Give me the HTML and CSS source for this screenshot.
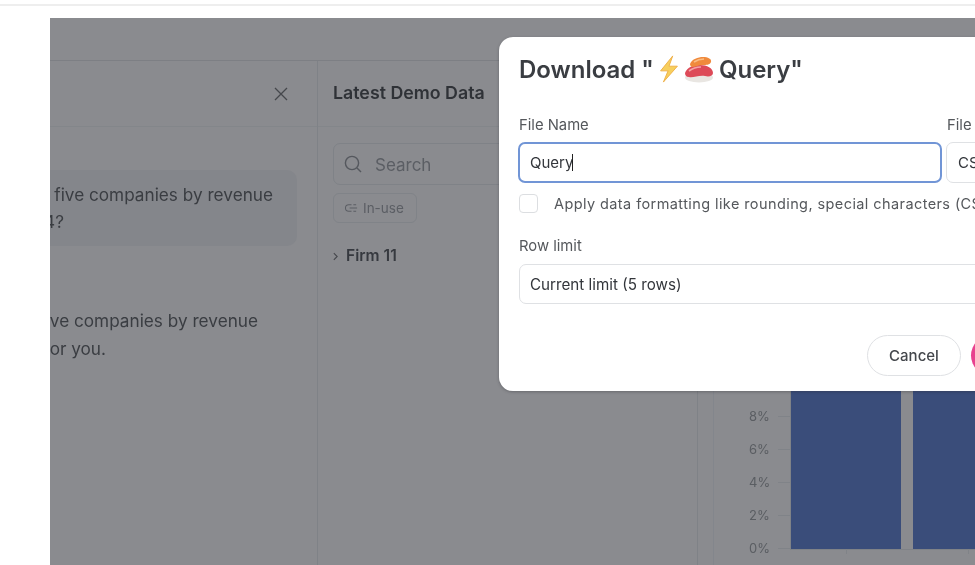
FILE: index.html
```html
<!DOCTYPE html>
<html lang="en">
<head>
<meta charset="utf-8">
<title>Download Query</title>
<link rel="stylesheet" href="styles.css">
</head>
<body>
<div class="topline"></div>
<main class="app">
  <div class="appbar"></div>
  <div class="columns">
    <section class="chat">
      <header class="chat-head">
        <svg class="close" viewBox="0 0 14 14" width="14" height="14"><path d="M1 1l12 12M13 1L1 13"/></svg>
      </header>
      <div class="bubble">
        <div class="line line-a">What are the top five companies by revenue</div>
        <div class="line line-b">in 2024?</div>
      </div>
      <div class="answer">
        <div class="line line-c">Here are the top five companies by revenue</div>
        <div class="line line-d">I found for you.</div>
      </div>
    </section>
    <section class="data">
      <header class="data-head">Latest Demo Data</header>
      <div class="data-body">
        <div class="search">
          <svg viewBox="0 0 20 20" width="20" height="20"><circle cx="9" cy="9" r="6.6"/><path d="M14 14l4 4"/></svg>
          <span>Search</span>
        </div>
        <div class="chip">
          <svg viewBox="0 0 14 10" width="13" height="10"><path d="M7 1.5H4a3.5 3.5 0 0 0 0 7h3M5 5h8M9 1.5h3M9 8.5h3"/></svg>
          <span>In-use</span>
        </div>
        <div class="tree">
          <svg viewBox="0 0 6 10" width="5" height="9"><path d="M1 1l4 4-4 4"/></svg>
          <span>Firm 11</span>
        </div>
      </div>
    </section>
    <section class="gutter"></section>
    <section class="chart">
      <div class="plot">
        <div class="axis">
          <span>8%</span><span>6%</span><span>4%</span><span>2%</span><span>0%</span>
        </div>
        <div class="bars">
          <div class="bar"></div>
          <div class="bar"></div>
        </div>
      </div>
    </section>
  </div>
</main>

<div class="modal" role="dialog">
  <h1 class="title">
    <span>Download "</span>
    <svg class="emoji bolt" viewBox="0 0 24 30" width="24" height="28"><path d="M16 1L3 17h8L6 29l15-17h-9z" fill="#f7cf5d" stroke="#eeae45" stroke-width="1"/></svg>
    <svg class="emoji sushi" viewBox="0 0 30 27" width="30" height="27"><ellipse cx="15" cy="21.5" rx="14" ry="5" fill="#e9e6e2"/><path d="M1 17c2-6 9-8 15-8 7 0 13 3 13 8 0 3-4 4-8 3-6-1-12 2-16 1-3 0-4-2-4-4z" fill="#dd4a58"/><path d="M5 15c4-3 8-4 12-4" fill="none" stroke="#f3a3a3" stroke-width="1.6"/><path d="M6 8c2-5 8-7 13-7 5 0 9 2 8 5-1 3-5 3-8 3-4 0-8 2-11 2-1 0-2-2-2-3z" fill="#f08a3c"/><path d="M10 6c3-2 6-3 10-3" fill="none" stroke="#f9bd84" stroke-width="1.6"/></svg>
    <span>Query"</span>
  </h1>
  <div class="form-row">
    <div class="field field-name">
      <label class="label">File Name</label>
      <div class="input input-focus"><span>Query</span><i class="caret"></i></div>
    </div>
    <div class="field field-type">
      <label class="label">File Type</label>
      <div class="input">CSV</div>
    </div>
  </div>
  <div class="check-row">
    <span class="checkbox"></span>
    <span class="check-text">Apply data formatting like rounding, special characters (CSV only)</span>
  </div>
  <div class="field field-limit">
    <label class="label">Row limit</label>
    <div class="input">Current limit (5 rows)</div>
  </div>
  <div class="actions">
    <button class="btn btn-cancel">Cancel</button>
    <button class="btn btn-primary">Download</button>
  </div>
</div>
</body>
</html>
```
FILE: styles.css
```css
* { box-sizing: border-box; }
html, body { margin: 0; height: 100%; }
body {
  width: 975px;
  height: 565px;
  overflow: hidden;
  position: relative;
  background: #fff;
  font-family: Inter, "Liberation Sans", sans-serif;
  color: #33363b;
}
.topline { height: 6px; border-bottom: 2px solid #eeeeee; margin-bottom: 12px; }
.app {
  margin-left: 50px;
  height: 547px;
  width: 925px;
  background: #8a8b8f;
  overflow: hidden;
  display: flex;
  flex-direction: column;
  filter: blur(0.6px);
}
.appbar { height: 43px; flex: none; border-bottom: 1px solid #7d7f84; }
.columns { flex: 1; display: flex; min-height: 0; }
.chat { width: 268px; flex: none; border-right: 1px solid #7f8287; overflow: hidden; }
.chat-head {
  height: 66px;
  border-bottom: 1px solid #83868a;
  display: flex;
  align-items: center;
  justify-content: flex-end;
  padding-right: 29px;
  padding-top: 1px;
}
.close { fill: none; stroke: #45474c; stroke-width: 1.3; }
.bubble {
  margin-top: 43px;
  width: 247px;
  height: 76px;
  background: #84868b;
  border-radius: 0 10px 10px 0;
  padding-top: 11px;
  font-size: 17.2px;
  line-height: 27px;
  color: #3a3d42;
}
.answer {
  margin-top: 61px;
  font-size: 17.2px;
  line-height: 27.5px;
  color: #3a3d42;
}
.line { display: flex; justify-content: flex-end; white-space: nowrap; }
.bubble .line-a { width: 223px; }
.bubble .line-b { width: 14px; }
.answer .line-c { width: 208px; }
.answer .line-d { width: 56px; }

.data { width: 380px; flex: none; border-right: 1px solid #7f8287; }
.data-head {
  height: 66px;
  border-bottom: 1px solid #83868a;
  padding: 22px 0 0 15px;
  font-size: 17.8px;
  font-weight: 600;
  line-height: 20px;
  color: #2f3237;
  white-space: nowrap;
}
.data-body { padding: 16px 0 0 15px; }
.search {
  height: 42px;
  border: 1px solid #7f8287;
  border-radius: 7px;
  display: flex;
  align-items: center;
  gap: 12px;
  padding-left: 9px;
  padding-top: 1px;
  font-size: 17px;
  color: #5b5e64;
}
.search svg { fill: none; stroke: #55585e; stroke-width: 1.4; margin-top: -2px; }
.chip {
  margin-top: 8px;
  width: 84px;
  height: 30px;
  border: 1px solid #808388;
  border-radius: 6px;
  display: flex;
  align-items: center;
  gap: 5px;
  padding-left: 11px;
  font-size: 13.5px;
  color: #5b5e64;
}
.chip svg { fill: none; stroke: #5b5e64; stroke-width: 1.1; }
.tree {
  margin-top: 23px;
  display: flex;
  align-items: center;
  gap: 8px;
  font-size: 15.6px;
  font-weight: 600;
  color: #36393f;
  line-height: 20px;
}
.tree svg { fill: none; stroke: #45474c; stroke-width: 1.3; }

.gutter { width: 16px; flex: none; border-right: 1px solid #83868c; }
.chart { flex: 1; min-width: 0; overflow: hidden; }
.plot { height: 100%; display: flex; padding-left: 35px; align-items: flex-end; padding-bottom: 15px; }
.axis {
  width: 41px;
  flex: none;
  display: flex;
  flex-direction: column;
  gap: 17px;
  font-size: 13px;
  line-height: 16px;
  color: #5a5d62;
  margin-bottom: -6px;
}
.axis span { display: flex; align-items: center; }
.axis span::after { content: ""; flex: 1; height: 1px; background: #808388; margin-left: 8px; }
.bars { display: flex; gap: 12px; height: 400px; flex: none; width: 300px; border-left: 1px solid #7f8287; border-bottom: 1px solid #7f8287; }
.bar { width: 110px; background: #3a4d7a; flex: none; position: relative; }
.bar::after { content: ""; position: absolute; left: 50%; top: 100%; width: 1px; height: 5px; background: #808388; }

.modal {
  position: absolute;
  left: 499px;
  top: 37px;
  width: 620px;
  height: 354px;
  background: #fff;
  border-radius: 14px 0 0 14px;
  padding: 0 20px;
  box-shadow: 0 1px 3px rgba(40, 40, 45, .35);
  filter: blur(0.5px);
}
.title {
  margin: 0;
  padding-top: 17px;
  height: 80px;
  display: flex;
  align-items: flex-start;
  font-size: 24px;
  line-height: 32px;
  font-weight: 600;
  color: #3a3d42;
  white-space: nowrap;
}
.emoji { flex: none; }
.bolt { margin: 1px 3px 0 3px; }
.sushi { margin: 2px 5px 0 0; }
.form-row { display: flex; gap: 4px; margin-left: -1px; }
.field-name { width: 424px; flex: none; }
.field-type { width: 160px; flex: none; }
.label {
  display: block;
  font-size: 14.8px;
  line-height: 17px;
  color: #55585c;
  margin: 0 0 8px 1px;
  white-space: nowrap;
}
.input {
  height: 41px;
  border: 1px solid #dfe1e4;
  border-radius: 7px;
  display: flex;
  align-items: center;
  padding-left: 11px;
  font-size: 15px;
  color: #33363b;
  white-space: nowrap;
}
.input-focus { border: 2px solid #7195d6; padding-left: 10px; }
.caret { width: 1px; height: 17px; background: #222; margin-left: -1px; }
.check-row {
  display: flex;
  align-items: center;
  gap: 16px;
  margin-top: 11px;
  height: 19px;
  font-size: 14.5px;
  letter-spacing: .41px;
  color: #55585c;
  white-space: nowrap;
}
.checkbox { width: 19px; height: 19px; flex: none; border: 1px solid #dcdee1; border-radius: 4px; }
.field-limit { margin-top: 25px; }
.field-limit .label { margin: 0 0 9px 0; }
.field-limit .input { padding-left: 10px; height: 40px; font-size: 15.2px; }
.actions { display: flex; gap: 10px; margin-top: 31px; margin-left: 348px; }
.btn {
  height: 41px;
  border-radius: 21px;
  font: 500 15px Inter, "Liberation Sans", sans-serif;
  flex: none;
}
.btn-cancel { width: 94px; background: #fff; border: 1px solid #dfe1e4; color: #44474c; }
.btn-primary { width: 120px; background: #e8418f; border: 0; color: #fff; }
```
